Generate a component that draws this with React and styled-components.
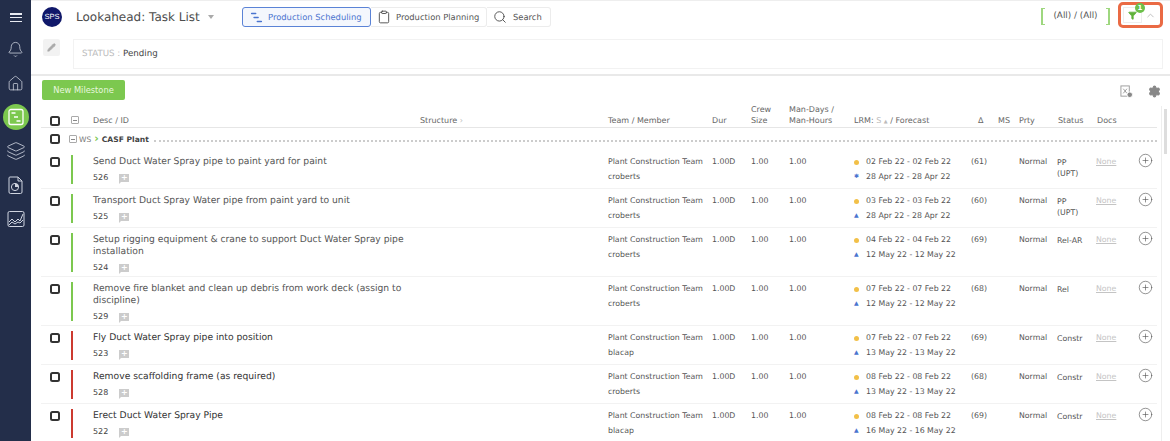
import React from 'react'
import styled, { createGlobalStyle } from 'styled-components'
import { Bell, House, Layers, Clipboard, Search, Filter, ChevronUp, Settings, Pencil, CirclePlus } from 'lucide-react'

const GlobalStyle = createGlobalStyle`
  html, body { margin: 0; padding: 0; height: 441px; overflow: hidden; background: #fff; }
  body { font-family: "DejaVu Sans", Verdana, sans-serif; color: #555; text-rendering: geometricPrecision; }
`

const columns = '30px 22px 327px 188px 104px 39px 38px 63px 119px 27px 21px 38px 39px 44px 1fr'

const tasks = [
  { id: 526, title: 'Send Duct Water Spray pipe to paint yard for paint', member: 'croberts', start: '02 Feb 22', end: '28 Apr 22', delta: '(61)', status: ['PP', '(UPT)'], color: 'green', mark: 'star' },
  { id: 525, title: 'Transport Duct Spray Water pipe from paint yard to unit', member: 'croberts', start: '03 Feb 22', end: '28 Apr 22', delta: '(60)', status: ['PP', '(UPT)'], color: 'green' },
  { id: 524, title: 'Setup rigging equipment & crane to support Duct Water Spray pipe installation', member: 'croberts', start: '04 Feb 22', end: '12 May 22', delta: '(69)', status: ['Rel-AR'], color: 'green' },
  { id: 529, title: 'Remove fire blanket and clean up debris from work deck (assign to discipline)', member: 'croberts', start: '07 Feb 22', end: '12 May 22', delta: '(68)', status: ['Rel'], color: 'green' },
  { id: 523, title: 'Fly Duct Water Spray pipe into position', member: 'blacap', start: '07 Feb 22', end: '13 May 22', delta: '(69)', status: ['Constr'], color: 'red', dark: true },
  { id: 528, title: 'Remove scaffolding frame (as required)', member: 'croberts', start: '08 Feb 22', end: '13 May 22', delta: '(68)', status: ['Constr'], color: 'red', dark: true },
  { id: 522, title: 'Erect Duct Water Spray Pipe', member: 'blacap', start: '08 Feb 22', end: '16 May 22', delta: '(69)', status: ['Constr'], color: 'red', dark: true },
]

const GanttIcon = ({ size = 14, color = 'currentColor' }) => (
  <svg width={size} height={size} viewBox="0 0 16 16" fill="none" stroke={color} strokeWidth="1.8" strokeLinecap="round">
    <path d="M2 3h5M5 8h5M9 13h5" />
  </svg>
)

const GanttDoc = () => (
  <svg width="20" height="20" viewBox="0 0 20 20" fill="none" stroke="#fff" strokeWidth="1.3">
    <rect x="3" y="2.5" width="14" height="15" rx="2" />
    <path d="M5.5 6h4M8 10h4M10.5 14h4" strokeWidth="1.5" />
  </svg>
)

const ClockDoc = () => (
  <svg width="18" height="20" viewBox="0 0 18 20" fill="none" stroke="#cfd4e0" strokeWidth="1">
    <path d="M3 2h8l4 4v11a1.500 1.500 0 0 1-1.500 1.500h-10A1.500 1.500 0 0 1 2 17V3a1 1 0 0 1 1-1z" />
    <path d="M11 2v4h4" />
    <circle cx="8" cy="12" r="3.600" />
    <path d="M8 12V8.400A3.600 3.600 0 0 1 11.600 12z" fill="#cfd4e0" stroke="none" />
  </svg>
)

const ChartBox = () => (
  <svg width="18" height="18" viewBox="0 0 18 18" fill="none" stroke="#cfd4e0" strokeWidth="1">
    <rect x="1" y="1.500" width="16" height="15" rx="1.500" />
    <path d="M2 12l3-3 3 3 3-3 2 2 3-7" />
    <path d="M2 15l3-3 3 2 3-2 2 1 3-3" />
  </svg>
)

const ColumnsAdd = () => (
  <svg width="13" height="13" viewBox="0 0 14 14" fill="none" stroke="#999" strokeWidth="1">
    <rect x="1" y="1" width="9" height="11" />
    <path d="M3.500 4l4 5M7.500 4l-4 5" />
    <circle cx="10.500" cy="10.500" r="3" fill="#888" stroke="#fff" />
  </svg>
)

const App = () => (
  <Page>
    <GlobalStyle />
    <Sidebar>
      <Hamburger><i /><i /><i /></Hamburger>
      <NavItem><Bell size={17} strokeWidth={1.1} color="#cfd4e0" /></NavItem>
      <NavItem><House size={17} strokeWidth={1.1} color="#cfd4e0" /></NavItem>
      <NavItem $active><GanttDoc /></NavItem>
      <NavItem><Layers size={20} strokeWidth={1} color="#cfd4e0" /></NavItem>
      <NavItem><ClockDoc /></NavItem>
      <NavItem><ChartBox /></NavItem>
    </Sidebar>
    <Main>
      <TopBar>
        <Logo>SPS</Logo>
        <TitleBlock>
          <Title>Lookahead: Task List</Title>
          <Caret />
        </TitleBlock>
        <ViewGroup>
          <ViewButton $active $w={129} $pad={7} $gap={5}><GanttIcon size={13} color="#4a74cf" />Production Scheduling</ViewButton>
          <ViewButton $w={116} $pad={6} $gap={5}><Clipboard size={14} strokeWidth={1.5} color="#444" />Production Planning</ViewButton>
          <ViewButton $w={64} $pad={6} $gap={6}><Search size={14} strokeWidth={1.5} color="#444" />Search</ViewButton>
        </ViewGroup>
        <RightTools>
          <Bracket>(All) / (All)</Bracket>
          <FilterFrame>
            <FilterButton>
              <Filter size={9} color="#5fb23a" fill="#5fb23a" />
              <Badge>1</Badge>
            </FilterButton>
            <CollapseButton><ChevronUp size={11} color="#bbb" /></CollapseButton>
          </FilterFrame>
        </RightTools>
      </TopBar>
      <StatusRow>
        <EditButton><Pencil size={9} color="#aaa" fill="#aaa" /></EditButton>
        <StatusBox><StatusKey>STATUS :</StatusKey> Pending</StatusBox>
      </StatusRow>
      <ActionRow>
        <MilestoneButton>New Milestone</MilestoneButton>
        <ActionIcons>
          <ColumnsAdd />
          <Settings size={13} color="#888" fill="#888" />
        </ActionIcons>
      </ActionRow>
      <Table>
        <HeaderRow>
          <CheckCell><Check /></CheckCell>
          <CollapseCell><Minus /></CollapseCell>
          <Head>Desc / ID</Head>
          <Head>Structure <Faint>&#8250;</Faint></Head>
          <Head>Team / Member</Head>
          <Head>Dur</Head>
          <Head>Crew<br />Size</Head>
          <Head>Man-Days /<br />Man-Hours</Head>
          <Head $pad={2}>LRM: <Faint>S <SortMark>&#9650;</SortMark></Faint> / Forecast</Head>
          <Head $pad={7}>&#916;</Head>
          <Head>MS</Head>
          <Head>Prty</Head>
          <Head $pad={1}>Status</Head>
          <Head $pad={1}>Docs</Head>
          <span />
        </HeaderRow>
        <GroupRow>
          <CheckCell><Check /></CheckCell>
          <GroupMinus><Minus /></GroupMinus>
          <GroupKey>WS</GroupKey>
          <GroupArrow>&#8250;</GroupArrow>
          <GroupName>CASF Plant</GroupName>
          <GroupLine />
        </GroupRow>
        {tasks.map((t) => (
          <TaskRow key={t.id}>
            <RowCheckCell><Check /></RowCheckCell>
            <BarCell><Bar $color={t.color} /></BarCell>
            <Desc>
              <TaskTitle $dark={t.dark}>{t.title}</TaskTitle>
              <IdLine>{t.id}<Comment /></IdLine>
            </Desc>
            <span />
            <Team>Plant Construction Team<Member>{t.member}</Member></Team>
            <Cell>1.00D</Cell>
            <Cell>1.00</Cell>
            <Cell>1.00</Cell>
            <Dates>
              <DateLine><Dot />{t.start} - {t.start}</DateLine>
              <DateLine><Mark>{t.mark === 'star' ? '✱' : '▲'}</Mark>{t.end} - {t.end}</DateLine>
            </Dates>
            <Cell>{t.delta}</Cell>
            <span />
            <Cell>Normal</Cell>
            <StatusCell>{t.status.map((s) => <div key={s}>{s}</div>)}</StatusCell>
            <DocLink>None</DocLink>
            <AddCell><CirclePlus size={15} strokeWidth={1} color="#555" /></AddCell>
          </TaskRow>
        ))}
        <ScrollTrack />
        <ScrollThumb />
      </Table>
    </Main>
  </Page>
)

const Page = styled.div`
  display: flex;
  width: 1170px;
  height: 441px;
  overflow: hidden;
`
const Sidebar = styled.nav`
  width: 31px;
  flex: none;
  background: #232e4a;
  display: flex;
  flex-direction: column;
  align-items: center;
  padding-top: 13px;
  box-sizing: border-box;
`
const Hamburger = styled.div`
  width: 12px;
  height: 9px;
  margin-bottom: 14px;
  display: flex;
  flex-direction: column;
  justify-content: space-between;
  i { display: block; height: 1.500px; background: #e8ebf2; }
`
const NavItem = styled.div`
  width: 26px;
  height: 26px;
  margin-bottom: 8px;
  border-radius: 50%;
  display: flex;
  align-items: center;
  justify-content: center;
  background: ${(p) => (p.$active ? '#7cc84f' : 'transparent')};
`
const Main = styled.main`
  flex: 1;
  min-width: 0;
  display: flex;
  flex-direction: column;
`
const TopBar = styled.header`
  height: 39px;
  box-sizing: border-box;
  flex: none;
  display: flex;
  align-items: flex-start;
  padding: 6px 7px 0 11px;
  border-top: 1px solid #eee;
`
const Logo = styled.div`
  width: 20px;
  height: 20px;
  border-radius: 50%;
  background: #10186a;
  color: #fff;
  font: 7.500px/20px "Liberation Sans", sans-serif;
  text-align: center;
`
const TitleBlock = styled.div`
  width: 166px;
  margin-left: 14px;
  display: flex;
`
const Title = styled.h1`
  margin: 0;
  font-size: 12px;
  line-height: 20px;
  font-weight: 400;
  white-space: nowrap;
  color: #4d4d4d;
`
const Caret = styled.span`
  width: 0;
  height: 0;
  margin: 8px 0 0 8px;
  border: 3.500px solid transparent;
  border-top: 4px solid #aaa;
  border-bottom: 0;
`
const ViewGroup = styled.div`
  display: flex;
  height: 20px;
`
const ViewButton = styled.div`
  width: ${(p) => p.$w}px;
  box-sizing: border-box;
  display: flex;
  align-items: center;
  gap: ${(p) => p.$gap}px;
  padding-left: ${(p) => p.$pad}px;
  font-size: 8.400px;
  white-space: nowrap;
  color: ${(p) => (p.$active ? '#4a74cf' : '#555')};
  background: ${(p) => (p.$active ? '#f4f7fd' : '#fff')};
  border: 1px solid ${(p) => (p.$active ? '#5b83d6' : '#ececec')};
  border-left-width: ${(p) => (p.$active ? 1 : 0)}px;
  border-radius: ${(p) => (p.$active ? '3px' : '0 3px 3px 0')};
`
const RightTools = styled.div`
  margin-left: auto;
  display: flex;
  align-items: flex-start;
  margin-top: -5px;
`
const Bracket = styled.div`
  position: relative;
  width: 69px;
  height: 17px;
  margin: 6px 8px 0 0;
  box-sizing: border-box;
  font-size: 8.800px;
  line-height: 17px;
  text-align: center;
  color: #555;
  border-left: 2px solid #9ed77f;
  border-right: 2px solid #9ed77f;
  &::before, &::after {
    content: '';
    position: absolute;
    left: 0;
    right: 0;
    height: 1px;
    background: linear-gradient(to right, #9ed77f 2px, transparent 2px, transparent calc(100% - 2px), #9ed77f calc(100% - 2px));
  }
  &::before { top: 0; }
  &::after { bottom: 0; }
`
const FilterFrame = styled.div`
  width: 45px;
  height: 26px;
  box-sizing: border-box;
  border: 3px solid #ea6a44;
  border-radius: 5px;
  display: flex;
  padding: 2px 2px;
`
const FilterButton = styled.div`
  position: relative;
  flex: 1;
  border: 1px solid #eee;
  border-right: 0;
  display: flex;
  align-items: center;
  justify-content: center;
`
const Badge = styled.span`
  position: absolute;
  top: -5px;
  right: -4px;
  width: 10px;
  height: 10px;
  border-radius: 50%;
  background: #6cc04a;
  color: #fff;
  font-size: 7px;
  font-weight: 700;
  line-height: 10px;
  text-align: center;
`
const CollapseButton = styled.div`
  width: 16px;
  border-left: 1px solid #eee;
  display: flex;
  align-items: center;
  justify-content: center;
`
const StatusRow = styled.div`
  height: 37px;
  flex: none;
  box-sizing: border-box;
  display: flex;
  padding-left: 12px;
  padding-right: 7px;
  border-bottom: 2px solid #e9e9e9;
`
const EditButton = styled.div`
  width: 17px;
  height: 17px;
  background: #f2f2f2;
  border-radius: 2px;
  display: flex;
  align-items: center;
  justify-content: center;
`
const StatusBox = styled.div`
  flex: 1;
  height: 30px;
  margin-left: 13px;
  box-sizing: border-box;
  border: 1px solid #f2f2f2;
  padding-left: 8px;
  font-size: 8.700px;
  line-height: 29px;
  color: #444;
`
const StatusKey = styled.span`
  color: #bbb;
`
const ActionRow = styled.div`
  height: 24px;
  flex: none;
  box-sizing: border-box;
  display: flex;
  justify-content: space-between;
  align-items: flex-start;
  padding: 4px 9px 0 11px;
`
const MilestoneButton = styled.button`
  width: 83px;
  height: 20px;
  padding: 0;
  border: 0;
  border-radius: 2px;
  background: #7cc84f;
  color: #e8f7df;
  font: 8.300px "DejaVu Sans", sans-serif;
`
const ActionIcons = styled.div`
  display: flex;
  gap: 15px;
  margin-top: 5px;
`
const Table = styled.div`
  position: relative;
  flex: 1;
  margin-left: 10px;
  padding-right: 13px;
  overflow: hidden;
`
const HeaderRow = styled.div`
  display: grid;
  grid-template-columns: ${columns};
  align-items: end;
  height: 28px;
  padding-bottom: 1px;
  box-sizing: border-box;
  border-bottom: 1px solid #e6e6e6;
  font-size: 8px;
  line-height: 11px;
  color: #666;
`
const Head = styled.div`
  padding-left: ${(p) => p.$pad || 0}px;
  white-space: nowrap;
`
const Faint = styled.span`
  color: #bbb;
`
const SortMark = styled.span`
  font-size: 5px;
  line-height: 0;
`
const CheckCell = styled.div`
  width: 30px;
  display: flex;
  padding-left: 9px;
  box-sizing: border-box;
`
const RowCheckCell = styled(CheckCell)`
  margin-top: 0.500px;
`
const Check = styled.span`
  display: block;
  width: 6px;
  height: 6px;
  border: 2px solid #333;
  border-radius: 2.500px;
`
const CollapseCell = styled.div`
  display: flex;
  padding-bottom: 2px;
`
const Minus = styled.span`
  position: relative;
  display: block;
  width: 6px;
  height: 6px;
  border: 1px solid #aaa;
  border-radius: 1px;
  &::after {
    content: '';
    position: absolute;
    left: 1px;
    right: 1px;
    top: 2.500px;
    height: 1px;
    background: #888;
  }
`
const GroupRow = styled.div`
  height: 22px;
  display: flex;
  align-items: center;
  font-size: 8px;
  box-sizing: border-box;
`
const GroupMinus = styled.span`
  margin-left: -2px;
`
const GroupKey = styled.span`
  margin-left: 2px;
  color: #777;
  font-size: 7.500px;
`
const GroupArrow = styled.span`
  margin: 0 3px;
  color: #7cc84f;
  font-weight: 700;
  font-size: 11px;
  line-height: 10px;
`
const GroupName = styled.span`
  font-weight: 700;
  color: #444;
  font-size: 7.600px;
`
const GroupLine = styled.span`
  flex: 1;
  margin-left: 5px;
  margin-top: 3px;
  border-top: 2px dotted #ccc;
`
const TaskRow = styled.div`
  display: grid;
  grid-template-columns: ${columns};
  box-sizing: border-box;
  min-height: 39px;
  border-bottom: 1px solid #f2f2f2;
  padding-top: 6px;
  font-size: 7.800px;
  line-height: 12px;
  color: #555;
`
const BarCell = styled.div`
  display: flex;
  margin: -1px 0 4px;
`
const Bar = styled.span`
  width: 2px;
  background: ${(p) => (p.$color === 'red' ? '#cc3a30' : '#7cc84f')};
`
const Desc = styled.div`
  padding: 0 12px 1.500px 0;
`
const TaskTitle = styled.div`
  font-size: 9.200px;
  line-height: 12px;
  margin-bottom: 2.500px;
  color: ${(p) => (p.$dark ? '#333' : '#555')};
`
const IdLine = styled.div`
  display: flex;
  align-items: center;
  height: 14px;
  font-size: 8px;
  color: #444;
`
const Comment = styled.span`
  position: relative;
  width: 10px;
  height: 8px;
  margin-left: 11px;
  background: #ccc;
  &::before {
    content: '';
    position: absolute;
    left: 0;
    top: 8px;
    border-top: 2px solid #ccc;
    border-right: 2px solid transparent;
  }
  &::after {
    content: '+';
    position: absolute;
    inset: 0;
    color: #fff;
    font-size: 8px;
    font-weight: 700;
    line-height: 8px;
    text-align: center;
  }
`
const Team = styled.div`
  white-space: nowrap;
`
const Member = styled.div`
  margin-top: 3px;
`
const Cell = styled.div``
const Dates = styled.div`
  padding-left: 2px;
`
const DateLine = styled.div`
  display: flex;
  align-items: center;
  height: 12px;
  white-space: nowrap;
  & + & { margin-top: 3px; }
`
const Dot = styled.span`
  width: 5px;
  height: 5px;
  margin-right: 7px;
  border-radius: 50%;
  background: #f2c048;
`
const Mark = styled.span`
  width: 6px;
  margin-right: 6px;
  font-size: 6px;
  color: #4a74cf;
`
const StatusCell = styled.div`
  line-height: 11px;
  margin-top: 0.500px;
`
const DocLink = styled.span`
  color: #c4c4c4;
  text-decoration: underline;
  width: fit-content;
  height: 12px;
`
const AddCell = styled.div`
  margin: -3.500px 0 0 -2px;
`
const ScrollTrack = styled.div`
  position: absolute;
  top: 6px;
  bottom: 0;
  right: 8px;
  width: 1px;
  background: #eee;
`
const ScrollThumb = styled.div`
  position: absolute;
  top: 9px;
  right: 3px;
  width: 3px;
  height: 45px;
  background: #ddd;
`

export default App
